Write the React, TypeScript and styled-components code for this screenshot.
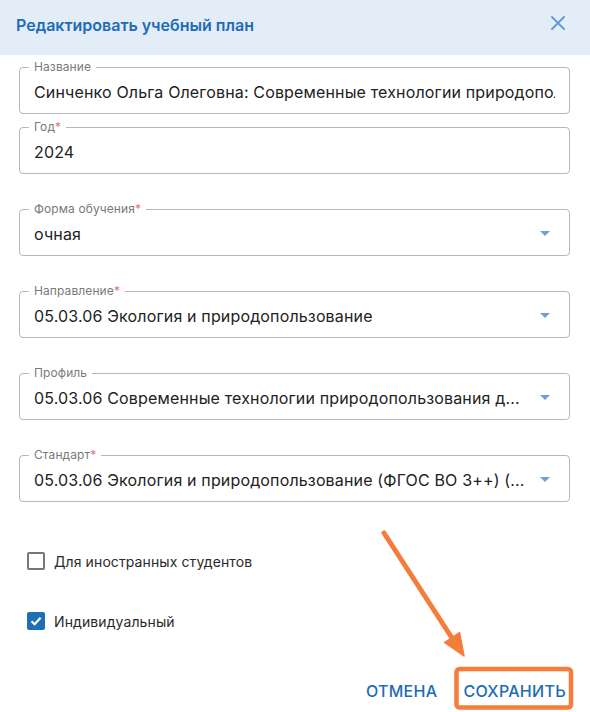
import React from "react";
import styled, { createGlobalStyle } from "styled-components";

const GlobalStyle = createGlobalStyle`
  html, body { margin: 0; padding: 0; background: #ffffff; }
  body { font-family: Inter, "Noto Sans", Arial, sans-serif; }
  * { box-sizing: border-box; }
`;

const Dialog = styled.div`
  position: relative;
  width: 590px;
  height: 712px;
  overflow: hidden;
  display: flex;
  flex-direction: column;
  background: #ffffff;
`;

const Header = styled.div`
  height: 55px;
  flex: none;
  background: #e3edf7;
  display: flex;
  align-items: center;
  justify-content: space-between;
  padding: 0 25px 0 16px;
`;

const Title = styled.h2`
  margin: 0;
  font-family: Inter, "Noto Sans", Arial, sans-serif;
  font-size: 16px;
  font-weight: 600;
  color: #1d6cb5;
  letter-spacing: 0;
  line-height: 20px;
  padding-bottom: 5px;
`;

const CloseButton = styled.button`
  border: 0;
  background: transparent;
  padding: 0;
  width: 14px;
  height: 14px;
  display: flex;
  margin-bottom: 9px;
  cursor: pointer;
`;

const Body = styled.div`
  display: flex;
  flex-direction: column;
  padding: 12px 20px 0 19px;
`;

const FieldBox = styled.div<{ $gap: number; $select?: boolean }>`
  position: relative;
  margin-top: ${(p) => p.$gap}px;
  height: 47px;
  border: 1px solid #b7b7b7;
  border-radius: 4px;
  display: flex;
  align-items: center;
  padding: 2px ${(p) => (p.$select ? 19 : 14)}px 0 14px;
  gap: 12px;
`;

const FieldLabel = styled.span`
  position: absolute;
  top: -8px;
  left: 9px;
  padding: 0 5px;
  background: #ffffff;
  font-size: 12px;
  line-height: 14px;
  letter-spacing: 0.1px;
  color: #7a7a7a;
`;

const Required = styled.span`
  color: #e57373;
`;

const Value = styled.span<{ $clip?: boolean }>`
  flex: 1;
  min-width: 0;
  font-size: 16px;
  line-height: 22px;
  letter-spacing: 0.15px;
  color: #222222;
  white-space: nowrap;
  overflow: hidden;
  text-overflow: ${(p) => (p.$clip ? "clip" : "ellipsis")};
`;

const Caret = styled.svg`
  flex: none;
  width: 10px;
  height: 5px;
`;

const CheckRow = styled.label<{ $gap: number }>`
  margin-top: ${(p) => p.$gap}px;
  height: 42px;
  display: flex;
  align-items: center;
  padding-left: 8px;
  gap: 9px;
  font-size: 14px;
  letter-spacing: 0.1px;
  color: #2a2a2a;
`;

const Box = styled.span<{ $checked: boolean }>`
  width: 18px;
  height: 18px;
  border-radius: 2px;
  border: ${(p) => (p.$checked ? "none" : "2px solid #777777")};
  background: ${(p) => (p.$checked ? "#1f6fb5" : "#ffffff")};
  display: flex;
  align-items: center;
  justify-content: center;
`;

const Footer = styled.div`
  margin-top: 31px;
  display: flex;
  justify-content: flex-end;
  gap: 10px;
  padding-right: 16px;
`;

const TextButton = styled.button`
  border: 0;
  background: transparent;
  padding: 7px 8px;
  font-family: Inter, "Noto Sans", Arial, sans-serif;
  font-size: 16px;
  font-weight: 500;
  letter-spacing: 0.3px;
  line-height: 22px;
  text-transform: uppercase;
  color: #1d6cb5;
  cursor: pointer;
`;

const Annotation = styled.svg`
  position: absolute;
  left: 0;
  top: 0;
  width: 590px;
  height: 712px;
  pointer-events: none;
`;

const CaretIcon = () => (
  <Caret viewBox="0 0 10 5">
    <polygon points="0,0 10,0 5,5" fill="#6b9fd6" />
  </Caret>
);

type FieldProps = {
  label: string;
  required?: boolean;
  value: string;
  gap: number;
  select?: boolean;
};

const Field = ({ label, required, value, gap, select }: FieldProps) => (
  <FieldBox $gap={gap} $select={select}>
    <FieldLabel>
      {label}
      {required && <Required>*</Required>}
    </FieldLabel>
    <Value $clip={!select}>{value}</Value>
    {select && <CaretIcon />}
  </FieldBox>
);

const Check = ({ checked, label, gap }: { checked: boolean; label: string; gap: number }) => (
  <CheckRow $gap={gap}>
    <Box $checked={checked}>
      {checked && (
        <svg width="14" height="14" viewBox="0 0 14 14">
          <polyline points="2.5,7.2 5.6,10.2 11.6,3.8" fill="none" stroke="#ffffff" strokeWidth="2.1" />
        </svg>
      )}
    </Box>
    {label}
  </CheckRow>
);

export default function App() {
  return (
    <>
      <GlobalStyle />
      <Dialog>
        <Header>
          <Title>Редактировать учебный план</Title>
          <CloseButton aria-label="close">
            <svg width="14" height="14" viewBox="0 0 14 14">
              <path d="M1 1 L13 13 M13 1 L1 13" stroke="#5d9ad6" strokeWidth="1.8" strokeLinecap="round" />
            </svg>
          </CloseButton>
        </Header>
        <Body>
          <Field
            gap={0}
            label="Название"
            value="Синченко Ольга Олеговна: Современные технологии природопользования для устойчивого развития"
          />
          <Field gap={13} label="Год" required value="2024" />
          <Field gap={35} label="Форма обучения" required value="очная" select />
          <Field gap={35} label="Направление" required value="05.03.06 Экология и природопользование" select />
          <Field gap={35} label="Профиль" value="05.03.06 Современные технологии природопользования д..." select />
          <Field
            gap={35}
            label="Стандарт"
            required
            value="05.03.06 Экология и природопользование (ФГОС ВО 3++) (..."
            select
          />
          <Check gap={38} checked={false} label="Для иностранных студентов" />
          <Check gap={18} checked label="Индивидуальный" />
        </Body>
        <Footer>
          <TextButton>Отмена</TextButton>
          <TextButton>Сохранить</TextButton>
        </Footer>
        <Annotation viewBox="0 0 590 712">
          <rect x="456.5" y="669" width="114.5" height="38.5" rx="3" fill="none" stroke="#f57d3c" strokeWidth="4.5" />
          <line x1="384" y1="533" x2="452" y2="638" stroke="#f57d3c" strokeWidth="5" strokeLinecap="round" />
          <polygon points="464,656 459.5,632.5 444.5,642.5" fill="#f57d3c" stroke="#f57d3c" strokeWidth="1.5" strokeLinejoin="round" />
        </Annotation>
      </Dialog>
    </>
  );
}
